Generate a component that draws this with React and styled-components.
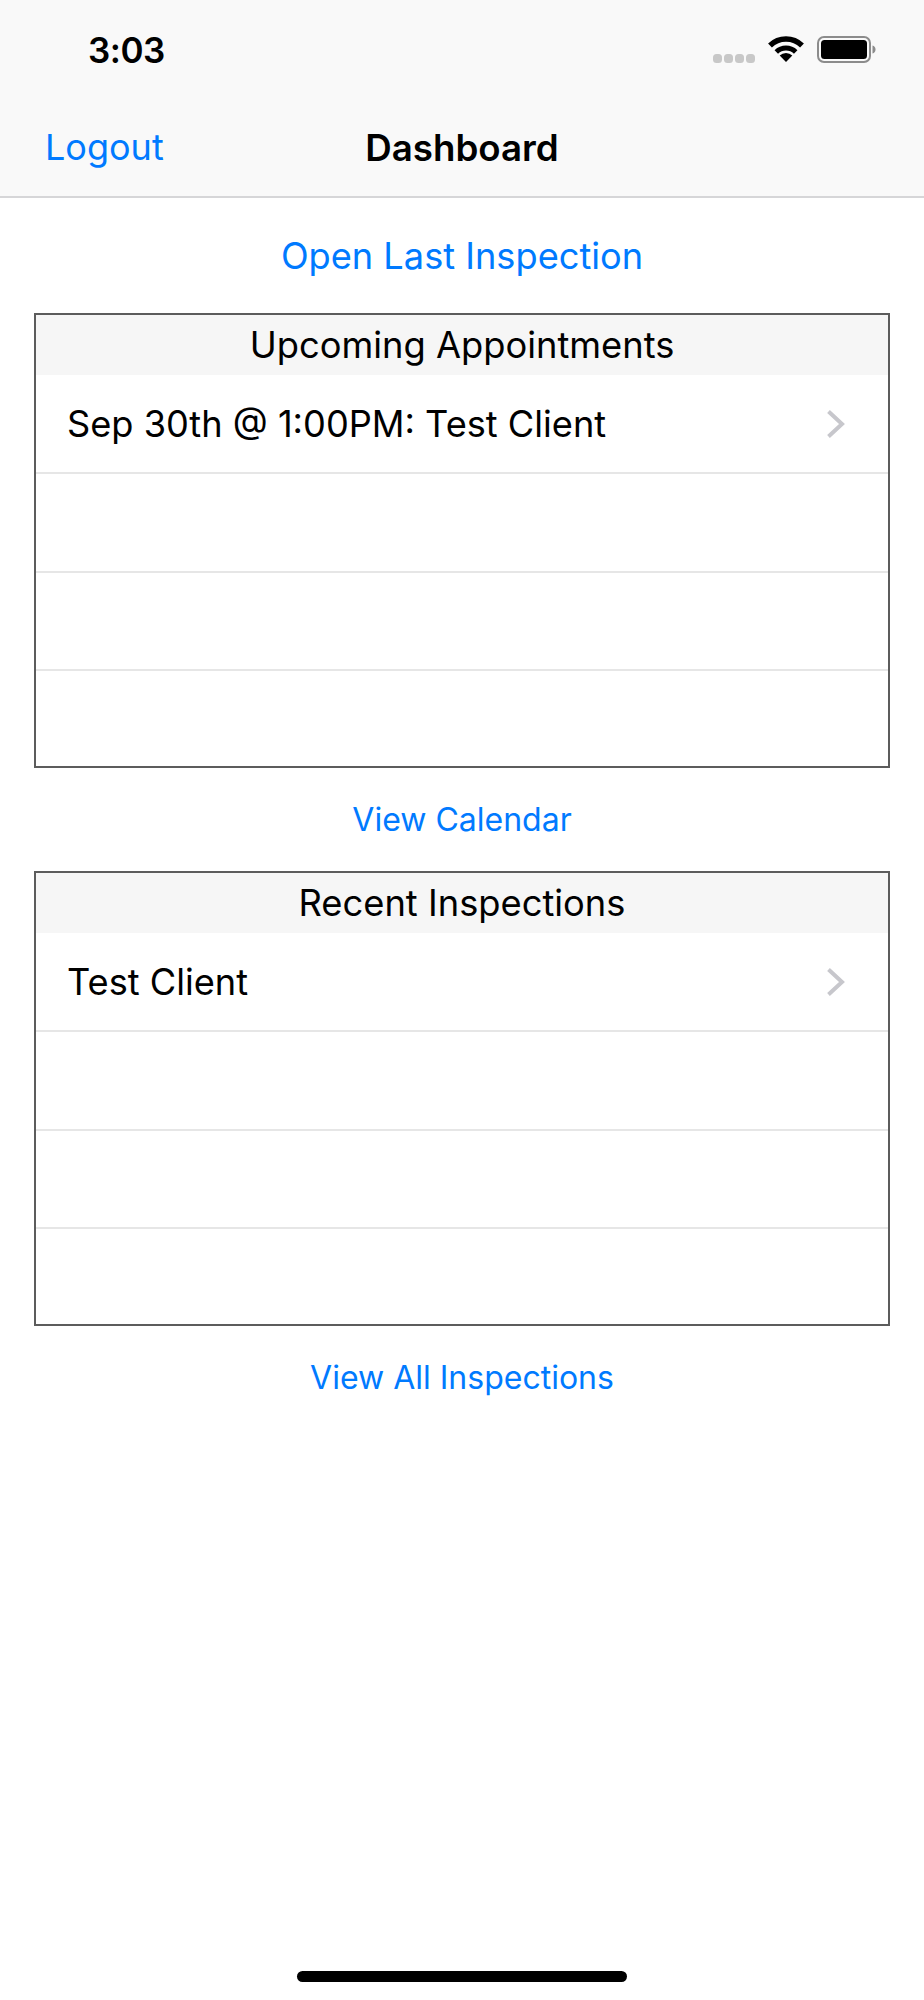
import styled, { createGlobalStyle } from "styled-components";

const GlobalStyle = createGlobalStyle`
  html, body {
    margin: 0;
    padding: 0;
    background: #ffffff;
  }
  body {
    font-family: Inter, "Liberation Sans", sans-serif;
  }
`;

const Page = styled.div`
  display: flex;
  flex-direction: column;
  width: 924px;
  height: 2000px;
  background: #ffffff;
  overflow: hidden;
`;

const Header = styled.header`
  background: #f9f9f9;
  border-bottom: 2px solid #d6d6d8;
`;

const StatusBar = styled.div`
  display: flex;
  align-items: center;
  justify-content: space-between;
  height: 98px;
  padding: 0 48px 0 88px;
  box-sizing: border-box;
`;

const Time = styled.span`
  margin-top: 1px;
  font-size: 35px;
  font-weight: 600;
  color: #000000;
  letter-spacing: -0.5px;
`;

const StatusIcons = styled.div`
  display: flex;
  align-items: center;
  gap: 13px;
`;

const SignalDots = styled.div`
  display: flex;
  gap: 2px;
  margin-top: 19px;
`;

const Dot = styled.span`
  width: 9px;
  height: 9px;
  border-radius: 3.5px;
  background: #c8c8c8;
`;

const NavBar = styled.nav`
  display: grid;
  grid-template-columns: 1fr auto 1fr;
  align-items: center;
  height: 98px;
  padding: 0 45px;
`;

const NavLink = styled.a`
  font-size: 36px;
  color: #007aff;
`;

const NavTitle = styled.h1`
  margin: 0;
  font-size: 36.7px;
  font-weight: 600;
  color: #000000;
`;

const Content = styled.main`
  display: flex;
  flex-direction: column;
  align-items: center;
  padding: 0 34px;
`;

const OpenLast = styled.a`
  display: flex;
  align-items: center;
  height: 115px;
  font-size: 36.2px;
  color: #007aff;
`;

const Card = styled.section`
  width: 100%;
  box-sizing: border-box;
  border: 2px solid #5c5c5c;
`;

const CardHeader = styled.div`
  display: flex;
  align-items: center;
  justify-content: center;
  height: 60px;
  background: #f6f6f6;
  font-size: 36.3px;
  color: #000000;
`;

const Row = styled.div`
  display: flex;
  align-items: center;
  justify-content: space-between;
  box-sizing: border-box;
  height: 97px;
  padding: 0 43px 0 31px;
  font-size: 36.2px;
  color: #000000;
  & + & {
    border-top: 2px solid #e6e6e6;
    height: 98.5px;
  }
  &:last-child {
    height: 97px;
  }
`;

const CardLink = styled.a`
  display: flex;
  align-items: center;
  justify-content: center;
  height: 103px;
  font-size: 32px;
  color: #007aff;
`;

const HomeIndicator = styled.div`
  width: 330px;
  height: 11px;
  margin: auto auto 18px;
  border-radius: 6px;
  background: #000000;
`;

const WifiIcon = () => (
  <svg width="36" height="26" viewBox="0 0 36 26" fill="none">
    <path d="M2 9.5A23 23 0 0 1 34 9.5" stroke="#000" strokeWidth="5.5" />
    <path d="M8.3 16A14 14 0 0 1 27.7 16" stroke="#000" strokeWidth="5" />
    <path d="M18 26L11.7 19.5A9 9 0 0 1 24.3 19.5Z" fill="#000" />
  </svg>
);

const BatteryIcon = () => (
  <svg width="59" height="27" viewBox="0 0 59 27" fill="none">
    <rect x="1" y="1" width="52" height="25" rx="6" stroke="#8c8c8c" strokeWidth="2" />
    <rect x="4" y="4" width="46" height="19" rx="3.5" fill="#000" />
    <path d="M55.5 9.5C57.5 10 58.5 11.5 58.5 13.5C58.5 15.5 57.5 17 55.5 17.5Z" fill="#8c8c8c" />
  </svg>
);

const Chevron = () => (
  <svg width="19" height="30" viewBox="0 0 19 30" fill="none">
    <path d="M2.5 2.5L16 15L2.5 27.5" stroke="#c7c7cc" strokeWidth="4" />
  </svg>
);

const ListCard = ({ title, item }) => (
  <Card>
    <CardHeader>{title}</CardHeader>
    <Row>
      {item}
      <Chevron />
    </Row>
    <Row />
    <Row />
    <Row />
  </Card>
);

export default function App() {
  return (
    <Page>
      <GlobalStyle />
      <Header>
        <StatusBar>
          <Time>3:03</Time>
          <StatusIcons>
            <SignalDots>
              <Dot />
              <Dot />
              <Dot />
              <Dot />
            </SignalDots>
            <WifiIcon />
            <BatteryIcon />
          </StatusIcons>
        </StatusBar>
        <NavBar>
          <NavLink>Logout</NavLink>
          <NavTitle>Dashboard</NavTitle>
        </NavBar>
      </Header>
      <Content>
        <OpenLast>Open Last Inspection</OpenLast>
        <ListCard title="Upcoming Appointments" item="Sep 30th @ 1:00PM: Test Client" />
        <CardLink>View Calendar</CardLink>
        <ListCard title="Recent Inspections" item="Test Client" />
        <CardLink>View All Inspections</CardLink>
      </Content>
      <HomeIndicator />
    </Page>
  );
}
